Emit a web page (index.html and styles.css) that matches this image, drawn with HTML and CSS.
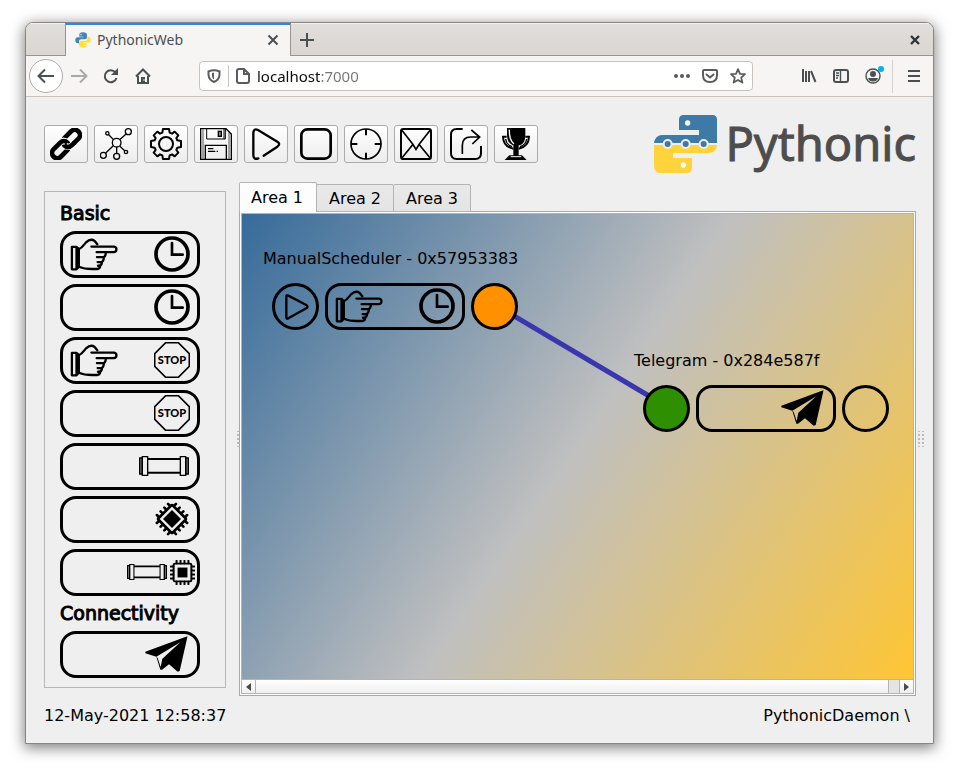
FILE: index.html
```html
<!DOCTYPE html>
<html lang="en">
<head>
<meta charset="utf-8">
<title>PythonicWeb</title>
<link rel="stylesheet" href="styles.css">
</head>
<body>
<svg class="defs" aria-hidden="true">
  <symbol id="hand" viewBox="0 0 144 100">
    <g fill="none" stroke="#000" stroke-width="7" stroke-linejoin="round" stroke-linecap="round">
      <path d="M5 27H19L26 33V87L19 95H5Z M19 28V94"/>
      <path d="M26 34C36 30 42 20 48 13Q62 0 74 9L82 19"/>
      <path d="M64 26H133Q140 27 140 34Q140 42 132 43H80"/>
      <path d="M108 43Q107 58 100 58H81 M102 58Q101 72 94 73H83 M96 73Q96 84 88 84H84 M91 84Q90 94 82 94H66Q42 94 26 87"/>
    </g>
  </symbol>
  <symbol id="clock" viewBox="0 0 108 108">
    <circle cx="54" cy="54" r="48" fill="none" stroke="#000" stroke-width="11"/>
    <path d="M54 21V56H86" fill="none" stroke="#000" stroke-width="8" stroke-linecap="round"/>
  </symbol>
  <symbol id="stop" viewBox="0 0 108 108">
    <path d="M35 2H73L106 35V73L73 106H35L2 73V35Z" fill="none" stroke="#000" stroke-width="5"/>
    <text x="54" y="67" text-anchor="middle" class="stop-text">STOP</text>
  </symbol>
  <symbol id="pipe" viewBox="0 0 150 60">
    <path d="M2 6H10V54H2Z M140 6H148V54H140Z" fill="#777" stroke="#000" stroke-width="4"/>
    <path d="M10 2H26V58H10Z M124 2H140V58H124Z" fill="none" stroke="#000" stroke-width="4"/>
    <path d="M26 9H124M26 50H124" fill="none" stroke="#000" stroke-width="6"/>
  </symbol>
  <symbol id="chip" viewBox="0 0 76 76">
    <rect x="11" y="11" width="54" height="54" rx="4" fill="none" stroke="#000" stroke-width="6"/>
    <rect x="23" y="23" width="30" height="30"/>
    <path d="M20 2V10M32 2V10M44 2V10M56 2V10M20 66V74M32 66V74M44 66V74M56 66V74M2 20H10M2 32H10M2 44H10M2 56H10M66 20H74M66 32H74M66 44H74M66 56H74" stroke="#000" stroke-width="6" stroke-linecap="round"/>
  </symbol>
  <symbol id="chip45" viewBox="6 6 96 96">
    <g transform="rotate(45 54 54)">
      <rect x="27" y="27" width="54" height="54" rx="3" fill="none" stroke="#000" stroke-width="7"/>
      <rect x="37" y="37" width="34" height="34"/>
      <path d="M33 18V25M47 18V25M61 18V25M75 18V25M33 83V90M47 83V90M61 83V90M75 83V90M18 33H25M18 47H25M18 61H25M18 75H25M83 33H90M83 47H90M83 61H90M83 75H90" stroke="#000" stroke-width="7" stroke-linecap="round"/>
    </g>
  </symbol>
  <symbol id="plane" viewBox="0 0 132 108">
    <path d="M127 1L1 47V52L34 62L106 19L52 68L47 93L38 66L34 62L46 101H51L72 85L98 107L104 105L127 4Z"/>
  </symbol>
  <symbol id="tri" viewBox="0 0 72 78">
    <path d="M4 8Q4 2 10 5L65 34Q70 38 65 42L10 73Q4 76 4 70Z" fill="none" stroke="#000" stroke-width="7"/>
  </symbol>
  <symbol id="python" viewBox="0 0 48 48">
    <path d="M24 1C15 1 13 4 13 9V14H25V16H8C3 16 1 20 1 25C1 30 3 34 8 34H12V28C12 24 15 22 19 22H30C34 22 36 19 36 16V9C36 4 32 1 24 1Z" fill="#4584b6"/>
    <path d="M24 47C33 47 35 44 35 39V34H23V32H40C45 32 47 28 47 23C47 18 45 14 40 14H37V20C37 24 34 26 30 26H19C15 26 12 29 12 32V39C12 44 16 47 24 47Z" fill="#ffe033"/>
    <circle cx="18" cy="8" r="2" fill="#fff"/><circle cx="30" cy="40" r="2" fill="#fff"/>
  </symbol>
</svg>

<div class="window">
  <div class="titlebar">
    <div class="browser-tab">
      <svg class="favicon"><use href="#python"/></svg>
      <span class="tab-title">PythonicWeb</span>
      <button class="plain" aria-label="Close tab"><svg width="12" height="12" viewBox="0 0 12 12"><path d="M1.500 1.500 10.500 10.500M10.500 1.500 1.500 10.500" class="line"/></svg></button>
    </div>
    <button class="plain new-tab" aria-label="New tab"><svg width="14" height="14" viewBox="0 0 14 14"><path d="M7 0V14M0 7H14" class="line"/></svg></button>
    <button class="plain close" aria-label="Close window"><svg width="10" height="10" viewBox="0 0 10 10"><path d="M1 1 9 9M9 1 1 9" stroke="#2e3436" stroke-width="2.400"/></svg></button>
  </div>

  <div class="navbar">
    <button class="plain back" aria-label="Back"><svg width="18" height="16" viewBox="0 0 18 16"><path d="M17 8H2M8 1.500 1.500 8 8 14.500" class="line"/></svg></button>
    <button class="plain nav" aria-label="Forward"><svg width="18" height="16" viewBox="0 0 18 16" opacity=".45"><path d="M1 8H16M10 1.500 16.500 8 10 14.500" class="line"/></svg></button>
    <button class="plain nav" aria-label="Reload"><svg width="16" height="16" viewBox="0 0 16 16"><path d="M12.500 4.500A6 6 0 1 0 13.500 10" class="line"/><path d="M15 0V7H8Z" fill="#4a4f51"/></svg></button>
    <button class="plain nav" aria-label="Home"><svg width="16" height="16" viewBox="0 0 16 16"><path d="M1 8.500 8 1.500 15 8.500M3 8V15H13V8" class="line"/><path d="M6 15V9H10V15Z" fill="#4a4f51"/><circle cx="9" cy="12" r=".8" fill="#fff"/></svg></button>
    <div class="urlbar">
      <svg width="14" height="14" viewBox="0 0 14 14"><path d="M1.500 2.500Q7 0 12.500 2.500V6Q12 11 7 13Q2 11 1.500 6Z" fill="none" stroke="#5b5b5d" stroke-width="2"/><path d="M5 4 7 3.500V10.500Q5 9 5 7Z" fill="#5b5b5d"/></svg>
      <span class="url-sep"></span>
      <svg width="14" height="16" viewBox="0 0 14 16"><path d="M3 1H8L13 6V13Q13 15 11 15H3Q1 15 1 13V3Q1 1 3 1ZM8 1V6H13" fill="none" stroke="#5b5b5d" stroke-width="2"/></svg>
      <input class="url" type="text" value="localhost:7000" aria-label="Address">
      <svg width="16" height="16" viewBox="0 0 16 16" fill="#5b5b5d"><circle cx="2" cy="8" r="2"/><circle cx="8" cy="8" r="2"/><circle cx="14" cy="8" r="2"/></svg>
      <svg width="16" height="16" viewBox="0 0 16 16" fill="none" stroke="#5b5b5d" stroke-width="2"><path d="M2 2H14Q15 2 15 3V7Q15 14 8 14Q1 14 1 7V3Q1 2 2 2Z"/><path d="M4.500 6.500 8 9.500 11.500 6.500" stroke-linecap="round"/></svg>
      <svg width="16" height="16" viewBox="0 0 16 16" fill="none" stroke="#5b5b5d" stroke-width="1.800" stroke-linejoin="round"><path d="M8 1.200 10 5.800 15 6.200 11.200 9.600 12.400 14.600 8 12 3.600 14.600 4.800 9.600 1 6.200 6 5.800Z"/></svg>
    </div>
    <button class="plain nav" aria-label="Library"><svg width="16" height="16" viewBox="0 0 16 16"><path d="M2 1V14M5 3V14M8 3V14M10 3 14.500 14" class="line"/></svg></button>
    <button class="plain nav" aria-label="Sidebars"><svg width="16" height="16" viewBox="0 0 16 16"><rect x="1" y="2" width="14" height="12" rx="2" class="line"/><path d="M7.500 2V14" class="line thin"/><path d="M3 5H6M3 7.500H6M3 10H5" class="line thin"/></svg></button>
    <button class="plain nav" aria-label="Account"><svg width="16" height="16" viewBox="0 0 16 16"><circle cx="8" cy="8" r="7" class="line thin"/><circle cx="8" cy="6" r="3" fill="#4a4f51"/><path d="M3 10H13Q12 13.500 8 13.500Q4 13.500 3 10Z" fill="#4a4f51"/></svg><span class="dot"></span></button>
    <span class="menu-sep"></span>
    <button class="plain nav" aria-label="Menu"><svg width="12" height="12" viewBox="0 0 12 12"><path d="M0 1H12M0 6H12M0 11H12" class="line"/></svg></button>
  </div>

  <div class="page">
    <header class="header">
      <button class="tool" aria-label="Connect"><svg viewBox="0 0 96 96"><g transform="rotate(-45 48 48)" fill="none" stroke-width="14"><rect x="42" y="32" width="59" height="31" rx="15" stroke="#000"/><path d="M30 32H38Q53 33 53 48" stroke="#f8f8f8" stroke-width="20"/><rect x="-5" y="33" width="59" height="31" rx="15" stroke="#000"/><path d="M43 50Q45 63 58 63H66" stroke="#f8f8f8" stroke-width="19"/><path d="M42 46V48Q42 63 58 63H70" stroke="#000"/></g></svg></button>
      <button class="tool" aria-label="Network"><svg viewBox="0 0 96 96" fill="none" stroke="#000" stroke-width="4"><circle cx="50" cy="44" r="13"/><circle cx="85" cy="11" r="9"/><circle cx="22" cy="16" r="5"/><circle cx="10" cy="82" r="9"/><circle cx="50" cy="85" r="9"/><circle cx="78" cy="72" r="5"/><path d="M59 35 79 17M41 35 26 20M40 53 17 75M50 57V76M59 54 74 68"/></svg></button>
      <button class="tool" aria-label="Settings"><svg viewBox="0 0 96 96" fill="none" stroke="#000" stroke-width="6" stroke-linejoin="round"><path d="M37 14 39 3H57L59 14 66 17 74 11 85 22 79 30 82 37 93 39V57L82 59 79 66 85 74 74 85 66 79 59 82 57 93H39L37 82 30 79 22 85 11 74 17 66 14 59 3 57V39L14 37 17 30 11 22 22 11 30 17Z"/><circle cx="48" cy="48" r="21"/></svg></button>
      <button class="tool" aria-label="Save"><svg viewBox="0 0 96 96" fill="none" stroke="#000" stroke-width="4"><path d="M2 2H78L94 18V94H2Z"/><path d="M9 4V92M87 13V92" stroke-width="2"/><path d="M20 2V33H72V2M72 33H76V2" stroke-width="3"/><rect x="55" y="10" width="9" height="15" fill="#888"/><path d="M16 94V52H79V94M24 62H40M24 70H46M50 70H54"/></svg></button>
      <button class="tool" aria-label="Start"><svg viewBox="0 0 96 96" fill="none" stroke="#000" stroke-width="7" stroke-linecap="round"><path d="M25 91Q11 96 10 82V14Q11 0 24 6L82 41Q93 48 82 56L41 83"/></svg></button>
      <button class="tool" aria-label="Stop"><svg viewBox="0 0 96 96"><rect x="4" y="4" width="88" height="88" rx="18" fill="none" stroke="#000" stroke-width="8"/></svg></button>
      <button class="tool" aria-label="Center"><svg viewBox="0 0 96 96" fill="none" stroke="#000" stroke-width="5"><circle cx="48" cy="48" r="45"/><path d="M48 3V22M48 74V93M3 48H22M74 48H93" stroke-width="6"/></svg></button>
      <button class="tool" aria-label="Messages"><svg viewBox="0 0 96 96" fill="none" stroke="#000" stroke-width="6"><rect x="3" y="3" width="90" height="90" rx="7"/><path d="M5 6 38 48Q48 64 48 64Q48 64 58 48L91 6M5 91 38 50M91 91 58 50" stroke-width="5"/></svg></button>
      <button class="tool" aria-label="Export"><svg viewBox="0 0 96 96" fill="none" stroke="#000" stroke-width="6"><path d="M38 3H20Q3 3 3 20V76Q3 93 20 93H76Q93 93 93 76V54"/><path d="M37 78V52Q37 27 62 27H88M64 6 89 27 67 48" stroke-width="5"/></svg></button>
      <button class="tool" aria-label="Trophy"><svg viewBox="0 0 96 96"><path d="M21 0H76V22Q76 46 60 52H56V82H66L80 96H14L28 82H40V52H38Q22 46 21 22Z"/><path d="M28 5Q27 35 42 48" fill="none" stroke="#f8f8f8" stroke-width="4"/><path d="M20 26H9Q10 56 40 62M76 26H87Q86 56 56 62" fill="none" stroke="#000" stroke-width="6"/><path d="M17 33Q19 50 36 56M80 33Q78 50 60 56" fill="none" stroke="#000" stroke-width="4"/><path d="M32 86H64" stroke="#f8f8f8" stroke-width="3"/></svg></button>
      <div class="logo">
        <svg width="63" height="58" viewBox="39 30 189 174">
          <path d="M114 44Q114 30 128 30H214Q228 30 228 44V114H39Q43 90 64 90H174V75H114Z" fill="#3d7aa6"/>
          <path d="M39 120H228Q226 144 204 144H96V159H153V190Q153 204 139 204H61Q39 204 39 182Z" fill="#ffd43b"/>
          <g fill="#eee"><circle cx="80" cy="117" r="15"/><circle cx="134" cy="117" r="15"/><circle cx="188" cy="117" r="15"/></g>
          <g fill="#3d7aa6"><circle cx="80" cy="117" r="9"/><circle cx="134" cy="117" r="9"/><circle cx="188" cy="117" r="9"/></g>
          <circle cx="140" cy="54" r="8" fill="#fff"/><circle cx="127" cy="180" r="8" fill="#fff"/>
        </svg>
        <span>Pythonic</span>
      </div>
    </header>

    <main class="main">
      <aside class="toolbox">
        <h2>Basic</h2>
        <button class="element" aria-label="Manual scheduler"><svg class="i-hand"><use href="#hand"/></svg><svg class="i-36"><use href="#clock"/></svg></button>
        <button class="element" aria-label="Scheduler"><svg class="i-36"><use href="#clock"/></svg></button>
        <button class="element" aria-label="Manual stop"><svg class="i-hand"><use href="#hand"/></svg><svg class="i-36"><use href="#stop"/></svg></button>
        <button class="element" aria-label="Stop"><svg class="i-36"><use href="#stop"/></svg></button>
        <button class="element wide" aria-label="Pipe"><svg class="i-pipe"><use href="#pipe"/></svg></button>
        <button class="element" aria-label="Process"><svg class="i-36"><use href="#chip45"/></svg></button>
        <button class="element combo" aria-label="Process pipe"><svg class="i-pipe-small"><use href="#pipe"/></svg><svg class="i-chip"><use href="#chip"/></svg></button>
        <h2>Connectivity</h2>
        <button class="element wide" aria-label="Telegram"><svg class="i-plane"><use href="#plane"/></svg></button>
      </aside>
      <div class="splitter"></div>
      <section class="workspace">
        <div class="tabs" role="tablist">
          <button class="tab active" role="tab" aria-selected="true">Area 1</button>
          <button class="tab" role="tab">Area 2</button>
          <button class="tab" role="tab">Area 3</button>
        </div>
        <div class="pane">
          <div class="view">
            <div class="canvas">
              <svg class="wires"><line x1="252" y1="90" x2="424" y2="192"/></svg>
              <div class="node scheduler">
                <div class="name">ManualScheduler - 0x57953383</div>
                <div class="row">
                  <button class="port" aria-label="Run"><svg class="i-tri"><use href="#tri"/></svg></button>
                  <div class="element"><svg class="i-hand"><use href="#hand"/></svg><svg class="i-36"><use href="#clock"/></svg></div>
                  <div class="port orange"></div>
                </div>
              </div>
              <div class="node telegram">
                <div class="name">Telegram - 0x284e587f</div>
                <div class="row">
                  <div class="port green"></div>
                  <div class="element wide"><svg class="i-plane"><use href="#plane"/></svg></div>
                  <div class="port"></div>
                </div>
              </div>
            </div>
            <div class="scrollbar">
              <button aria-label="Scroll left"><svg width="5" height="8"><path d="M5 0V8L0 4Z"/></svg></button>
              <div class="thumb"></div>
              <div class="track"></div>
              <button aria-label="Scroll right"><svg width="5" height="8"><path d="M0 0V8L5 4Z"/></svg></button>
            </div>
          </div>
        </div>
      </section>
      <div class="splitter right"></div>
    </main>

    <footer class="footer"><span>12-May-2021 12:58:37</span><span>PythonicDaemon \</span></footer>
  </div>
</div>
</body>
</html>
```
FILE: styles.css
```css
* { box-sizing: border-box; }
body {
  margin: 0;
  padding: 22px 25px 28px;
  background: #fff;
  font: 16px/19px "DejaVu Sans", sans-serif;
  color: #000;
}
button, input { font: inherit; color: inherit; padding: 0; margin: 0; border: 0; background: none; }
svg { display: block; flex: none; }
.defs { position: absolute; width: 0; height: 0; }
.line { fill: none; stroke: #4a4f51; stroke-width: 2; }
.thin { stroke-width: 1.400; }
.plain { display: flex; align-items: center; justify-content: center; }

.window {
  display: flex;
  flex-direction: column;
  min-height: calc(100vh - 50px);
  border: 1px solid #868686;
  border-radius: 8px 8px 0 0;
  overflow: hidden;
  background: #efefef;
  box-shadow: 0 3px 14px 1px rgba(0, 0, 0, .5);
}

.titlebar {
  display: flex;
  height: 33px;
  padding-left: 39px;
  background: linear-gradient(#e1dedb, #dad6d2);
  box-shadow: inset 0 1px #f3f1f0, inset 0 -1px #979490;
}
.browser-tab {
  display: flex;
  align-items: center;
  width: 226px;
  padding: 0 11px 2px 9px;
  border: solid #979490;
  border-width: 0 1px;
  border-top: 2px solid #3584e4;
  background: #f6f5f4;
  font: 14px/20px "Noto Sans", sans-serif;
  color: #4a4f51;
}
.favicon { width: 16px; height: 16px; margin-right: 6px; }
.tab-title { flex: 1; }
.new-tab { width: 32px; }
.close { width: 36px; margin-left: auto; }

.navbar {
  display: flex;
  align-items: center;
  height: 41px;
  padding: 0 3px;
  background: #f6f5f4;
  border-bottom: 1px solid #c8c3be;
}
.back { width: 34px; height: 34px; border: 1px solid #b0aeac; border-radius: 50%; background: #fff; }
.nav { width: 32px; height: 32px; position: relative; }
.urlbar {
  display: flex;
  align-items: center;
  flex: 1;
  gap: 7px;
  height: 30px;
  margin: 0 40px;
  padding: 0 6px 0 7px;
  border: 1px solid #c8c3be;
  border-radius: 4px;
  background: #fff;
}
.urlbar svg + svg { margin-left: 5px; }
.url-sep { width: 1px; height: 22px; background: #c8c3be; }
.url {
  flex: 1;
  min-width: 0;
  height: 22px;
  font: 15px/22px "Noto Sans", sans-serif;
  color: transparent;
  background: linear-gradient(90deg, #0c0c0d 63px, #76767a 63px);
  -webkit-background-clip: text;
  background-clip: text;
}
.dot { position: absolute; right: 5px; top: 6px; width: 6px; height: 6px; border-radius: 50%; background: #00b3f4; }
.menu-sep { width: 1px; height: 33px; margin: 0 5px 0 3px; background: #d5d1cd; }

.page { flex: 1; display: flex; flex-direction: column; padding: 18px 0 18px 18px; }
.header { display: flex; align-items: center; gap: 6px; height: 58px; padding-right: 17px; }
.tool {
  display: flex;
  align-items: center;
  justify-content: center;
  width: 44px;
  height: 38px;
  border: 1px solid #ababab;
  border-radius: 3px;
  background: linear-gradient(#fff, #ededed);
}
.tool svg { width: 32px; height: 32px; }
.logo {
  display: flex;
  align-items: flex-start;
  gap: 8px;
  margin-left: auto;
  font: 47px/56px "Noto Sans", sans-serif;
  color: #4d4d4d;
  -webkit-text-stroke: 1px #4d4d4d;
}

.main { flex: 1; display: flex; padding-top: 9px; }
.toolbox {
  display: flex;
  flex-direction: column;
  align-items: flex-start;
  gap: 6px;
  width: 182px;
  margin: 9px 0 8px;
  padding: 10px 15px 9px;
  border: 1px solid #b6b6b6;
}
.toolbox h2 { margin: 0; font-size: 19px; font-weight: 400; line-height: 23px; -webkit-text-stroke: 1px #000; }
.element {
  display: flex;
  align-items: center;
  width: 140px;
  height: 47px;
  padding: 0 7px 1px;
  border: 3px solid #000;
  border-radius: 16px;
}
.element svg:last-child { margin-left: auto; }
.element.wide { padding-right: 8px; }
.element.combo { justify-content: flex-end; gap: 3px; padding-right: 2px; }
.element.combo svg:last-child { margin-left: 0; }
.i-hand { width: 48px; height: 33px; }
.i-36 { width: 36px; height: 36px; }
.i-pipe { width: 50px; height: 20px; }
.i-pipe-small { width: 40px; height: 16px; }
.i-chip { width: 25px; height: 25px; }
.i-plane { width: 44px; height: 36px; }
.i-tri { width: 24px; height: 26px; margin-left: 3px; }
.stop-text { font: 900 33px "Lato", sans-serif; }

.splitter {
  width: 13px;
  background: radial-gradient(circle, #bbb 1px, transparent 1px) 10px 50% / 4px 4px;
  clip-path: inset(calc(50% - 8px) 0 calc(50% - 8px) 10px);
}
.splitter.right {
  width: 17px;
  background-position: 1px 50%;
  clip-path: inset(calc(50% - 8px) 8px calc(50% - 8px) 1px);
}
.workspace { flex: 1; display: flex; flex-direction: column; min-width: 0; }
.tabs { display: flex; align-items: flex-end; height: 30px; margin-bottom: -1px; position: relative; }
.tab {
  width: 77px;
  height: 28px;
  margin-left: -1px;
  border: 1px solid #b4b4b4;
  border-radius: 2px 2px 0 0;
  background: linear-gradient(#e9e9e9, #e4e4e4);
}
.tab + .tab { width: 78px; }
.tab.active { width: 78px; height: 30px; margin-left: 0; padding-right: 2px; border-bottom: 0; background: #fdfdfd; }
.pane { flex: 1; display: flex; padding: 1px; border: 1px solid #a9a9a9; background: #fff; }
.view { flex: 1; display: flex; flex-direction: column; border: 1px solid #b4b4b4; border-bottom: 0; }
.canvas {
  flex: 1;
  position: relative;
  overflow: hidden;
  background: linear-gradient(124deg, #366b9a, #c0c0c0 50%, #ffc634);
}
.wires { position: absolute; width: 100%; height: 100%; }
.wires line { stroke: #3a36ae; stroke-width: 5; }
.node { position: absolute; }
.scheduler { left: 21px; top: 35px; }
.telegram { left: 392px; top: 137px; }
.name { margin-bottom: 15px; }
.row { display: flex; gap: 6px; padding-left: 9px; }
.port {
  display: flex;
  align-items: center;
  justify-content: center;
  width: 47px;
  height: 47px;
  border: 3px solid #000;
  border-radius: 50%;
}
.orange { background: #ff9000; }
.green { background: #2e8f00; }

.scrollbar { display: flex; height: 15px; border: solid #b4b4b4; border-width: 1px 0; background: #fff; }
.scrollbar button { display: flex; align-items: center; justify-content: center; width: 13px; background: linear-gradient(#fff, #efefef); fill: #4a4a4a; }
.thumb { flex: 1; border: solid #b4b4b4; border-width: 0 1px; background: linear-gradient(#fff, #efefef); }
.track { width: 11px; background: #e4e4e4; border-right: 1px solid #b4b4b4; }

.footer { display: flex; justify-content: space-between; padding: 10px 23px 0 0; }
```
